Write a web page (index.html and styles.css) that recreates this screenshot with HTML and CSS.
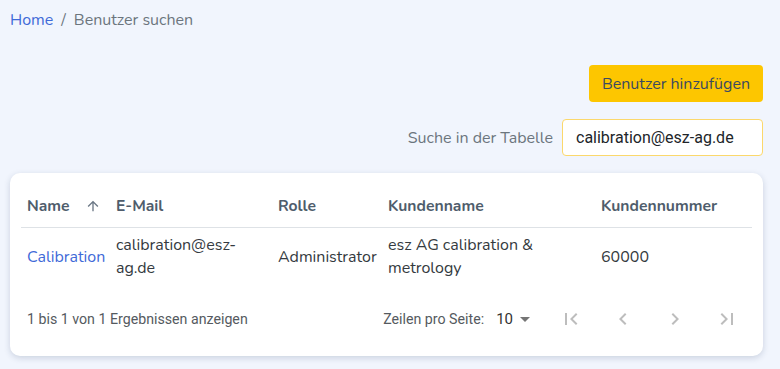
FILE: index.html
```html
<!DOCTYPE html>
<html lang="de">
<head>
<meta charset="utf-8">
<title>Benutzer suchen</title>
<link rel="stylesheet" href="styles.css">
</head>
<body>
<div class="page">
  <nav class="crumbs"><a class="crumb-link">Home</a><span class="sep">/</span><span class="crumb-current">Benutzer suchen</span></nav>
  <div class="actions"><button class="btn-add">Benutzer hinzufügen</button></div>
  <div class="search"><label class="search-label">Suche in der Tabelle</label><input class="search-input" value="calibration@esz-ag.de"></div>
  <div class="card">
    <div class="table">
      <div class="row head">
        <div class="cell c-name">Name <svg class="sort" width="16" height="16" viewBox="0 0 24 24"><path d="M4 12l1.41 1.41L11 7.83V20h2V7.83l5.58 5.59L20 12l-8-8-8 8z" fill="#6b7785"/></svg></div>
        <div class="cell">E-Mail</div>
        <div class="cell">Rolle</div>
        <div class="cell">Kundenname</div>
        <div class="cell">Kundennummer</div>
      </div>
      <div class="row body">
        <div class="cell link">Calibration</div>
        <div class="cell">calibration@esz-<br>ag.de</div>
        <div class="cell">Administrator</div>
        <div class="cell">esz AG calibration &amp;<br>metrology</div>
        <div class="cell">60000</div>
      </div>
    </div>
    <div class="footer">
      <div class="range">1 bis 1 von 1 Ergebnissen anzeigen</div>
      <div class="pager">
        <span class="per-label">Zeilen pro Seite:</span>
        <span class="per-select">10 <svg width="10" height="5" viewBox="0 0 10 5"><path d="M0 0l5 5 5-5z" fill="#757575"/></svg></span>
        <span class="pg-btn"><svg width="24" height="24" viewBox="0 0 24 24"><path d="M18.41 16.59L13.82 12l4.59-4.59L17 6l-6 6 6 6zM6 6h2v12H6z" fill="#bdbdbd"/></svg></span>
        <span class="pg-btn"><svg width="24" height="24" viewBox="0 0 24 24"><path d="M15.41 7.41L14 6l-6 6 6 6 1.41-1.41L10.83 12z" fill="#bdbdbd"/></svg></span>
        <span class="pg-btn"><svg width="24" height="24" viewBox="0 0 24 24"><path d="M10 6L8.59 7.41 13.17 12l-4.58 4.59L10 18l6-6z" fill="#bdbdbd"/></svg></span>
        <span class="pg-btn"><svg width="24" height="24" viewBox="0 0 24 24"><path d="M5.59 7.41L10.18 12l-4.59 4.59L7 18l6-6-6-6zM16 6h2v12h-2z" fill="#bdbdbd"/></svg></span>
      </div>
    </div>
  </div>
</div>
</body>
</html>
```
FILE: styles.css
```css
html, body { margin: 0; padding: 0; }
body {
  background: #f1f5fd;
  font-family: "Nunito", "Lato", "Noto Sans", sans-serif;
  color: #495057;
  width: 780px;
  height: 369px;
  overflow: hidden;
}
.page { padding: 10px 17px 0 10px; }
.crumbs { font-size: 16px; line-height: 20px; display: flex; align-items: center; }
.crumb-link { color: #3f6ad8; }
.sep { color: #6c757d; padding: 0 8px; }
.crumb-current { color: #6c757d; }
.actions { display: flex; justify-content: flex-end; margin-top: 35px; }
.btn-add {
  background: #fdc600;
  border: none;
  border-radius: 4px;
  height: 37px;
  width: 174px;
  font-family: inherit;
  font-size: 16px;
  color: #3b4a62;
  padding: 0;
}
.search { display: flex; justify-content: flex-end; align-items: center; margin-top: 17px; }
.search-label { font-size: 16px; color: #6c757d; margin-right: 9px; }
.search-input {
  box-sizing: border-box;
  width: 201px;
  height: 37px;
  border: 1px solid #fbd86c;
  border-radius: 4px;
  background: #fff;
  font-family: "Roboto", sans-serif;
  font-size: 16px;
  color: #212529;
  padding: 0 13px;
  outline: none;
}
.card {
  margin-top: 17px;
  background: #fff;
  border-radius: 10px;
  box-shadow: 0 2px 6px rgba(30, 50, 90, 0.18);
  padding: 11px 11px 0 11px;
  height: 183px;
  box-sizing: border-box;
}
.row {
  display: grid;
  grid-template-columns: 89px 162px 110px 213px 157px;
  padding-left: 6px;
}
.head {
  height: 43px;
  align-items: center;
  border-bottom: 1px solid #dee2e6;
  font-weight: 700;
  color: #4f5d6c;
  font-size: 15.7px;
}
.c-name { display: flex; align-items: center; }
.sort { margin-left: 15px; }
.body {
  align-items: center;
  padding-top: 6px;
  font-size: 16px;
  line-height: 23px;
  color: #343a40;
}
.link { color: #3f6ad8; }
.footer {
  display: flex;
  align-items: center;
  justify-content: space-between;
  padding-left: 6px;
  margin-top: 27px;
  font-family: "Roboto", sans-serif;
  font-size: 14.2px;
  color: #555a60;
}
.pager { display: flex; align-items: center; }
.per-label { color: #555a60; margin-right: 12px; }
.per-select { font-size: 15px; color: #333; display: flex; align-items: center; gap: 7px; margin-right: 29px; }
.pg-btn { width: 52px; display: flex; justify-content: flex-start; }
.pg-btn:last-child { width: 37px; }
```
